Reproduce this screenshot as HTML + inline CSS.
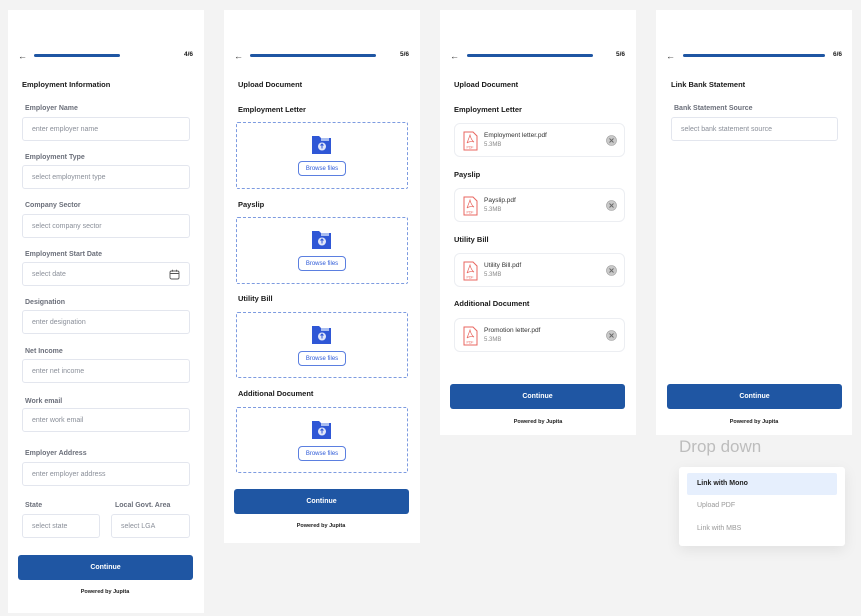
<!DOCTYPE html>
<html><head><meta charset="utf-8"><style>
*{margin:0;padding:0;box-sizing:border-box}
body{width:861px;height:616px;background:#f3f3f3;position:relative;overflow:hidden;font-family:"Liberation Sans",sans-serif;color:#1a1a1a}
.p{position:absolute;background:#fff}
.a{position:absolute}
.t{position:absolute;font-size:7.5px;font-weight:bold;line-height:10px;white-space:nowrap;margin-top:1px}
.l{position:absolute;font-size:7px;font-weight:bold;color:#6b6f7a;line-height:10px;white-space:nowrap;margin-top:2px}
.in{position:absolute;border:1px solid #e3e6ee;border-radius:3px;font-size:7px;color:#8a8f99;padding-left:9px;display:flex;align-items:center}
.bar{position:absolute;height:3px;background:#1f56a3;border-radius:2px}
.arr{position:absolute;font-size:9px;line-height:10px;color:#333}
.st{position:absolute;font-size:6.5px;font-weight:bold;line-height:10px;margin-top:1px}
.btn{position:absolute;background:#1f56a3;border-radius:3px;color:#fff;font-size:7px;font-weight:bold;display:flex;align-items:center;justify-content:center}
.pw{position:absolute;font-size:5.5px;font-weight:bold;line-height:8px;white-space:nowrap;transform:translateX(-50%)}
.box{position:absolute;border:1px dashed #7d9be0;border-radius:2px}
.bf{position:absolute;left:61px;width:48px;height:15px;border:1px solid #5b7fe0;border-radius:4px;font-size:6px;color:#2e5ad8;display:flex;align-items:center;justify-content:center}
.card{position:absolute;border:1px solid #eceef2;border-radius:6px;width:171px;height:34px}
.fn{position:absolute;left:29px;top:8px;font-size:6.5px;color:#333;white-space:nowrap}
.fs{position:absolute;left:29px;top:18px;font-size:6px;color:#888}
</style></head><body>

<!-- Panel 1 -->
<div class="p" style="left:8px;top:10px;width:196px;height:603px"></div>
<div class="arr" style="left:18px;top:51px">&#8592;</div>
<div class="bar" style="left:34px;top:54px;width:86px"></div>
<div class="st" style="left:184px;top:49px">4/6</div>
<div class="t" style="left:22px;top:79px">Employment Information</div>
<div class="l" style="left:25px;top:102px">Employer Name</div>
<div class="in" style="left:22px;top:117px;width:168px;height:24px">enter employer name</div>
<div class="l" style="left:25px;top:151px">Employment Type</div>
<div class="in" style="left:22px;top:165px;width:168px;height:24px">select employment type</div>
<div class="l" style="left:25px;top:199px">Company Sector</div>
<div class="in" style="left:22px;top:214px;width:168px;height:24px">select company sector</div>
<div class="l" style="left:25px;top:248px">Employment Start Date</div>
<div class="in" style="left:22px;top:262px;width:168px;height:24px">select date
<svg class="a" style="left:146px;top:6px" width="11" height="11" viewBox="0 0 11 11" fill="none" stroke="#555" stroke-width="0.9"><rect x="1" y="2" width="9" height="8" rx="1.5"/><path d="M1 4.5h9M3.5 0.8v2M7.5 0.8v2"/></svg></div>
<div class="l" style="left:25px;top:296px">Designation</div>
<div class="in" style="left:22px;top:310px;width:168px;height:24px">enter designation</div>
<div class="l" style="left:25px;top:345px">Net Income</div>
<div class="in" style="left:22px;top:359px;width:168px;height:24px">enter net income</div>
<div class="l" style="left:25px;top:395px">Work email</div>
<div class="in" style="left:22px;top:408px;width:168px;height:24px">enter work email</div>
<div class="l" style="left:25px;top:447px">Employer Address</div>
<div class="in" style="left:22px;top:462px;width:168px;height:24px">enter employer address</div>
<div class="l" style="left:25px;top:499px">State</div>
<div class="l" style="left:115px;top:499px">Local Govt. Area</div>
<div class="in" style="left:22px;top:514px;width:78px;height:24px">select state</div>
<div class="in" style="left:111px;top:514px;width:79px;height:24px">select LGA</div>
<div class="btn" style="left:18px;top:555px;width:175px;height:25px">Continue</div>
<div class="pw" style="left:105px;top:588px">Powered by Jupita</div>

<!-- Panel 2 -->
<div class="p" style="left:224px;top:10px;width:196px;height:533px"></div>
<div class="arr" style="left:234px;top:51px">&#8592;</div>
<div class="bar" style="left:250px;top:54px;width:126px"></div>
<div class="st" style="left:400px;top:49px">5/6</div>
<div class="t" style="left:238px;top:79px">Upload Document</div>

<div class="t" style="left:238px;top:104px">Employment Letter</div>
<div class="box" style="left:236px;top:122px;width:172px;height:67px">
<svg class="a" style="left:74px;top:11px" width="22" height="22" viewBox="0 0 22 22"><path d="M1 2h7l2 2h10v16H1z" fill="#2f57d6"/><path d="M10 4h8v3H10z" fill="#a9bdf0"/><circle cx="11" cy="12.5" r="4" fill="#fff" opacity=".85"/><path d="M11 14.5v-4M9.5 11.5l1.5-1.5 1.5 1.5" stroke="#2f57d6" stroke-width="1" fill="none"/></svg>
<div class="bf" style="top:38px">Browse files</div></div>

<div class="t" style="left:238px;top:199px">Payslip</div>
<div class="box" style="left:236px;top:217px;width:172px;height:67px">
<svg class="a" style="left:74px;top:11px" width="22" height="22" viewBox="0 0 22 22"><path d="M1 2h7l2 2h10v16H1z" fill="#2f57d6"/><path d="M10 4h8v3H10z" fill="#a9bdf0"/><circle cx="11" cy="12.5" r="4" fill="#fff" opacity=".85"/><path d="M11 14.5v-4M9.5 11.5l1.5-1.5 1.5 1.5" stroke="#2f57d6" stroke-width="1" fill="none"/></svg>
<div class="bf" style="top:38px">Browse files</div></div>

<div class="t" style="left:238px;top:293px">Utility Bill</div>
<div class="box" style="left:236px;top:312px;width:172px;height:66px">
<svg class="a" style="left:74px;top:11px" width="22" height="22" viewBox="0 0 22 22"><path d="M1 2h7l2 2h10v16H1z" fill="#2f57d6"/><path d="M10 4h8v3H10z" fill="#a9bdf0"/><circle cx="11" cy="12.5" r="4" fill="#fff" opacity=".85"/><path d="M11 14.5v-4M9.5 11.5l1.5-1.5 1.5 1.5" stroke="#2f57d6" stroke-width="1" fill="none"/></svg>
<div class="bf" style="top:38px">Browse files</div></div>

<div class="t" style="left:238px;top:388px">Additional Document</div>
<div class="box" style="left:236px;top:407px;width:172px;height:66px">
<svg class="a" style="left:74px;top:11px" width="22" height="22" viewBox="0 0 22 22"><path d="M1 2h7l2 2h10v16H1z" fill="#2f57d6"/><path d="M10 4h8v3H10z" fill="#a9bdf0"/><circle cx="11" cy="12.5" r="4" fill="#fff" opacity=".85"/><path d="M11 14.5v-4M9.5 11.5l1.5-1.5 1.5 1.5" stroke="#2f57d6" stroke-width="1" fill="none"/></svg>
<div class="bf" style="top:38px">Browse files</div></div>

<div class="btn" style="left:234px;top:489px;width:175px;height:25px">Continue</div>
<div class="pw" style="left:321px;top:522px">Powered by Jupita</div>

<!-- Panel 3 -->
<div class="p" style="left:440px;top:10px;width:196px;height:425px"></div>
<div class="arr" style="left:450px;top:51px">&#8592;</div>
<div class="bar" style="left:467px;top:54px;width:126px"></div>
<div class="st" style="left:616px;top:49px">5/6</div>
<div class="t" style="left:454px;top:79px">Upload Document</div>

<div class="t" style="left:454px;top:104px">Employment Letter</div>
<div class="card" style="left:454px;top:123px"><svg class="a" style="left:8px;top:7px" width="15" height="20" viewBox="0 0 15 20"><path d="M1 1h9l4 4v14H1z" fill="#fff" stroke="#e8665f"/><path d="M4 12c2-5 3-8 3-8s1 5 4 7c-3-1-6 0-7 1z" fill="none" stroke="#e8665f" stroke-width=".7"/><text x="3.5" y="17.5" font-size="3.5" fill="#e8665f" font-family="Liberation Sans">PDF</text></svg><div class="fn">Employment letter.pdf</div><div class="fs">5.3MB</div><svg class="a" style="left:151px;top:11px" width="11" height="11" viewBox="0 0 11 11"><circle cx="5.5" cy="5.5" r="5" fill="#c9c9c9" stroke="#999" stroke-width=".6"/><path d="M3.5 3.5l4 4M7.5 3.5l-4 4" stroke="#666" stroke-width=".9"/></svg></div>

<div class="t" style="left:454px;top:169px">Payslip</div>
<div class="card" style="left:454px;top:188px"><svg class="a" style="left:8px;top:7px" width="15" height="20" viewBox="0 0 15 20"><path d="M1 1h9l4 4v14H1z" fill="#fff" stroke="#e8665f"/><path d="M4 12c2-5 3-8 3-8s1 5 4 7c-3-1-6 0-7 1z" fill="none" stroke="#e8665f" stroke-width=".7"/><text x="3.5" y="17.5" font-size="3.5" fill="#e8665f" font-family="Liberation Sans">PDF</text></svg><div class="fn">Payslip.pdf</div><div class="fs">5.3MB</div><svg class="a" style="left:151px;top:11px" width="11" height="11" viewBox="0 0 11 11"><circle cx="5.5" cy="5.5" r="5" fill="#c9c9c9" stroke="#999" stroke-width=".6"/><path d="M3.5 3.5l4 4M7.5 3.5l-4 4" stroke="#666" stroke-width=".9"/></svg></div>

<div class="t" style="left:454px;top:234px">Utility Bill</div>
<div class="card" style="left:454px;top:253px"><svg class="a" style="left:8px;top:7px" width="15" height="20" viewBox="0 0 15 20"><path d="M1 1h9l4 4v14H1z" fill="#fff" stroke="#e8665f"/><path d="M4 12c2-5 3-8 3-8s1 5 4 7c-3-1-6 0-7 1z" fill="none" stroke="#e8665f" stroke-width=".7"/><text x="3.5" y="17.5" font-size="3.5" fill="#e8665f" font-family="Liberation Sans">PDF</text></svg><div class="fn">Utility Bill.pdf</div><div class="fs">5.3MB</div><svg class="a" style="left:151px;top:11px" width="11" height="11" viewBox="0 0 11 11"><circle cx="5.5" cy="5.5" r="5" fill="#c9c9c9" stroke="#999" stroke-width=".6"/><path d="M3.5 3.5l4 4M7.5 3.5l-4 4" stroke="#666" stroke-width=".9"/></svg></div>

<div class="t" style="left:454px;top:298px">Additional Document</div>
<div class="card" style="left:454px;top:318px"><svg class="a" style="left:8px;top:7px" width="15" height="20" viewBox="0 0 15 20"><path d="M1 1h9l4 4v14H1z" fill="#fff" stroke="#e8665f"/><path d="M4 12c2-5 3-8 3-8s1 5 4 7c-3-1-6 0-7 1z" fill="none" stroke="#e8665f" stroke-width=".7"/><text x="3.5" y="17.5" font-size="3.5" fill="#e8665f" font-family="Liberation Sans">PDF</text></svg><div class="fn">Promotion letter.pdf</div><div class="fs">5.3MB</div><svg class="a" style="left:151px;top:11px" width="11" height="11" viewBox="0 0 11 11"><circle cx="5.5" cy="5.5" r="5" fill="#c9c9c9" stroke="#999" stroke-width=".6"/><path d="M3.5 3.5l4 4M7.5 3.5l-4 4" stroke="#666" stroke-width=".9"/></svg></div>

<div class="btn" style="left:450px;top:384px;width:175px;height:25px">Continue</div>
<div class="pw" style="left:538px;top:418px">Powered by Jupita</div>

<!-- Panel 4 -->
<div class="p" style="left:656px;top:10px;width:196px;height:425px"></div>
<div class="arr" style="left:666px;top:51px">&#8592;</div>
<div class="bar" style="left:683px;top:54px;width:142px"></div>
<div class="st" style="left:833px;top:49px">6/6</div>
<div class="t" style="left:671px;top:79px">Link Bank Statement</div>
<div class="l" style="left:674px;top:102px">Bank Statement Source</div>
<div class="in" style="left:671px;top:117px;width:167px;height:24px">select bank statement source</div>
<div class="btn" style="left:667px;top:384px;width:175px;height:25px">Continue</div>
<div class="pw" style="left:754px;top:418px">Powered by Jupita</div>

<div class="a" style="left:679px;top:437px;font-size:17px;color:#bdbdbd;white-space:nowrap">Drop down</div>
<div class="a" style="left:679px;top:467px;width:166px;height:79px;background:#fff;border-radius:3px;box-shadow:0 4px 14px rgba(0,0,0,.08)">
<div class="a" style="left:8px;top:6px;width:150px;height:22px;background:#e6effd;border-radius:2px"></div>
<div class="a" style="left:18px;top:13px;font-size:7px;font-weight:bold;color:#222">Link with Mono</div>
<div class="a" style="left:18px;top:35px;font-size:7px;color:#999">Upload PDF</div>
<div class="a" style="left:18px;top:58px;font-size:7px;color:#999">Link with MBS</div>
</div>
</body></html>
